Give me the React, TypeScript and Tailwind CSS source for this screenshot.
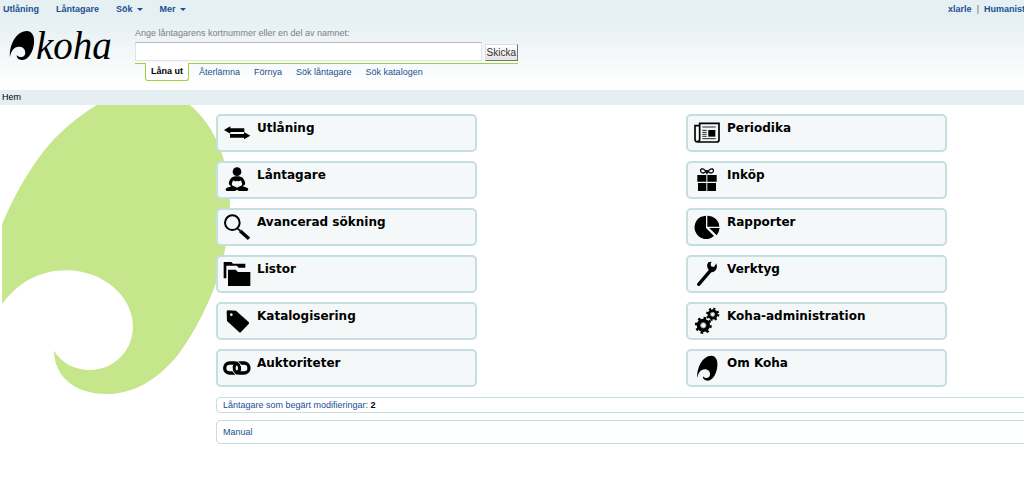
import type { ReactNode } from "react";

const LEAF =
  "M0 68 C-3 38 15 0 42 0 C56 0 62 15 60 32 C58 54 46 75 32 75 C21 75 16 69 17 62 C23 71 39 68 38 56 C38 46 31 41 22 41 C10 41 2 52 0 68 Z";

function Icon({ children }: { children: ReactNode }) {
  return (
    <svg viewBox="0 0 78 78" className="size-[26px] shrink-0 overflow-visible" aria-hidden="true">
      {children}
    </svg>
  );
}

const arrows = (
  <Icon>
    <path d="M0 30 L19 19 V25 H61 V36 H19 V41 Z M79 47 L60 36 V42 H18 V53 H60 V58 Z" />
  </Icon>
);
const patron = (
  <Icon>
    <circle cx="39" cy="14" r="13" />
    <path d="M39 28 C22 28 18 36 15 46 C13 52 17 56 22 58 L9 62 C3 65 4 72 12 72 H33 L39 68 L45 72 H66 C74 72 75 65 69 62 L56 58 C61 56 65 52 63 46 C60 36 56 28 39 28 Z" />
    <path d="M27 40 C32 44 36 43 39 41 C42 43 46 44 51 40 C52 47 56 49 54 54 C50 60 43 58 39 62 C35 58 28 60 24 54 C22 49 26 47 27 40 Z" fill="#f4f8f9" />
  </Icon>
);
const search = (
  <Icon>
    <circle cx="25" cy="26" r="22" fill="none" stroke="#000" strokeWidth="6" />
    <path d="M40 43 L48 50" stroke="#000" strokeWidth="5" />
    <path d="M48 50 L75 74" stroke="#000" strokeWidth="10" />
  </Icon>
);
const folders = (
  <Icon>
    <path d="M-1 3 H22 L27 8 H64 V20 H44 L38 14 H7 V52 H-1 Z" />
    <path d="M12 26 H35 L42 33 H79 V75 H12 Z" />
  </Icon>
);
const tag = (
  <Icon>
    <path d="M11 7 L36 8 L74 42 Q77 45 74 48 L51 72 Q48 75 45 72 L9 39 L8 11 Q8 8 11 7 Z" />
    <circle cx="22" cy="20" r="4" fill="#f4f8f9" />
  </Icon>
);
const chain = (
  <Icon>
    <g fill="none" stroke="#000" strokeWidth="10">
      <rect x="2" y="24" width="45" height="30" rx="15" />
      <rect x="30" y="24" width="45" height="30" rx="15" />
    </g>
    <path d="M24 36 C24 47 29 54 37 60 M53 42 C53 31 48 24 40 18" fill="none" stroke="#f4f8f9" strokeWidth="3" />
  </Icon>
);
const news = (
  <Icon>
    <path d="M17 17 H3 V58 Q3 66 11 66 H69 Q75 66 75 60 V10 H17 V56 Q17 65 10 65" fill="none" stroke="#000" strokeWidth="5" />
    <rect x="43" y="30" width="21" height="20" />
    <path d="M25 21 H65 M25 31 H38 M25 37 H38 M25 43 H38 M25 49 H38 M25 56 H65" stroke="#000" strokeWidth="2.5" />
  </Icon>
);
const gift = (
  <Icon>
    <path d="M10 24 H37 V44 H10 Z M40 24 H68 V44 H40 Z M12 48 H37 V72 H12 Z M40 48 H66 V72 H40 Z" />
    <path d="M39 19 C34 9 28 4 22 6 C17 9 20 18 27 18 C33 18 36 12 39 11 C42 12 45 18 51 18 C58 18 61 9 56 6 C50 4 44 9 39 19 Z" fill="none" stroke="#000" strokeWidth="4" />
  </Icon>
);
const pie = (
  <Icon>
    <path d="M36 5 A35 35 0 1 0 60 66 L36 42 Z" />
    <path d="M40 5 A35 35 0 0 1 76 38 L40 38 Z" />
    <path d="M46 42 H77 Q75 56 68 64 Z" />
  </Icon>
);
const wrench = (
  <Icon>
    <path d="M14 70 L50 28" stroke="#000" strokeWidth="10" strokeLinecap="round" />
    <path d="M43 4 C37 12 39 20 44 26 L50 34 C59 35 67 29 69 18 L67 7 L60 18 L51 16 L50 8 L53 2 Z" />
  </Icon>
);
const gears = (
  <Icon>
    <g fill="none" stroke="#000">
      <circle cx="28" cy="52" r="14" strokeWidth="12" />
      <circle cx="28" cy="52" r="22" strokeWidth="7" strokeDasharray="8 9.28" />
      <circle cx="56" cy="19" r="11" strokeWidth="9" />
      <circle cx="56" cy="19" r="17" strokeWidth="6" strokeDasharray="6.2 7.15" />
      <circle cx="28" cy="52" r="8" stroke="#999" strokeWidth="3" />
      <circle cx="56" cy="19" r="6" stroke="#999" strokeWidth="3" />
    </g>
  </Icon>
);
const leaf = (
  <Icon>
    <path d={LEAF} transform="translate(10 2)" />
  </Icon>
);

type Item = { label: string; icon: ReactNode };

const columns: Item[][] = [
  [
    { label: "Utlåning", icon: arrows },
    { label: "Låntagare", icon: patron },
    { label: "Avancerad sökning", icon: search },
    { label: "Listor", icon: folders },
    { label: "Katalogisering", icon: tag },
    { label: "Auktoriteter", icon: chain },
  ],
  [
    { label: "Periodika", icon: news },
    { label: "Inköp", icon: gift },
    { label: "Rapporter", icon: pie },
    { label: "Verktyg", icon: wrench },
    { label: "Koha-administration", icon: gears },
    { label: "Om Koha", icon: leaf },
  ],
];

function Caret() {
  return (
    <svg viewBox="0 0 6 3" className="h-[3px] w-[6px]" aria-hidden="true">
      <path d="M0 0 H6 L3 3 Z" fill="#1b4f93" />
    </svg>
  );
}

export default function App() {
  return (
    <div className="overflow-x-hidden bg-white font-['Liberation_Sans',Arial,sans-serif] text-[9px] leading-3 text-black">
      <header className="h-[90px] bg-linear-to-b from-[#e6eff2] from-20% to-white to-95%">
        <nav className="flex h-[18px] items-center justify-between whitespace-nowrap pl-[3px] font-bold text-[#1b4f93]">
          <div className="flex items-center gap-[17px]">
            <a href="#utlaning">Utlåning</a>
            <a href="#lantagare">Låntagare</a>
            <button type="button" className="flex items-center gap-1">
              Sök <Caret />
            </button>
            <button type="button" className="flex items-center gap-1">
              Mer <Caret />
            </button>
          </div>
          <div className="-mr-px flex gap-[5px]">
            <a href="#konto">xlarle</a>
            <span className="font-normal text-[#666]">|</span>
            <a href="#bibliotek">Humanist</a>
          </div>
        </nav>
        <div className="flex">
          <a href="#hem" className="flex w-[135px] items-start pl-[10px] pt-[13px]" aria-label="Koha">
            <svg viewBox="0 0 60 75" className="h-[29px] w-6 shrink-0 overflow-visible" preserveAspectRatio="none" aria-hidden="true">
              <path d={LEAF} />
            </svg>
            <span className="pl-[2px] font-['Liberation_Serif',serif] text-[39px] italic leading-[30px]">koha</span>
          </a>
          <form className="w-[383px] pt-[9px]" onSubmit={(e) => e.preventDefault()}>
            <label htmlFor="kort" className="block text-[#808080]">
              Ange låntagarens kortnummer eller en del av namnet:
            </label>
            <div className="flex items-end gap-[3px] pb-[2px] pt-[3px]">
              <input
                id="kort"
                type="text"
                className="h-[19px] min-w-0 flex-1 border border-[#dde3e6] border-t-[#b5b8ba] bg-white px-1 text-[10px]"
              />
              <button
                type="submit"
                className="h-[17px] border border-[#ddd] border-b-[#777] border-r-[#777] bg-linear-to-b from-white to-[#e3e3e3] px-px text-[10px] leading-3 text-[#333]"
              >
                Skicka
              </button>
            </div>
            <div className="h-px bg-[#a0d03c]" />
            <div className="flex items-start pl-[10px] text-[#1b4f93]">
              <a
                href="#lana"
                className="-mt-px rounded-b-[3px] border border-t-0 border-[#a0d03c] bg-white px-[5px] pb-[3px] pt-[2px] font-bold text-black"
              >
                Låna ut
              </a>
              <div className="flex gap-[14px] pl-[10px] pt-[2px]">
                <a href="#aterlamna">Återlämna</a>
                <a href="#fornya">Förnya</a>
                <a href="#sok">Sök låntagare</a>
                <a href="#katalog">Sök katalogen</a>
              </div>
            </div>
          </form>
        </div>
      </header>
      <div className="h-[15px] bg-[#e5eff1] pl-[2px] leading-[14px]">Hem</div>
      <main className="relative pb-9 pl-[216px] pt-[9px]">
        <svg viewBox="6 14 684 868" className="absolute left-[2px] top-0 h-[289px] w-[228px]" aria-hidden="true">
          <path
            fill="#c5e68a"
            d="M290 14 C240 45 190 85 150 130 C90 200 40 290 6 372 L6 612 C50 550 115 510 200 510 C310 510 399 590 399 678 C399 755 340 810 270 810 C225 810 185 790 162 752 C162 825 220 882 320 882 C400 882 470 840 530 770 C580 705 620 625 650 545 C680 450 690 380 690 310 C690 200 655 85 570 14 Z"
          />
        </svg>
        <div className="relative flex justify-between pr-[77px]">
          {columns.map((items, i) => (
            <ul key={i} className="flex w-[261px] flex-col gap-[9px]">
              {items.map((item) => (
                <li key={item.label}>
                  <a
                    href="#modul"
                    className="flex h-[38px] gap-[7px] rounded-[5px] border-2 border-[#c3dfe0] bg-[#f4f8f9] pl-[6px] pt-1"
                  >
                    {item.icon}
                    <span className="font-['DejaVu_Sans',Verdana,sans-serif] text-[12px] font-bold leading-4">
                      {item.label}
                    </span>
                  </a>
                </li>
              ))}
            </ul>
          ))}
        </div>
        <div className="relative -mr-2 mt-[10px] flex flex-col gap-[7px]">
          <div className="rounded-[4px] border border-[#c5dfe3] px-[6px] py-px">
            <a href="#andringar" className="text-[#1b4f93]">
              Låntagare som begärt modifieringar:
            </a>{" "}
            <b>2</b>
          </div>
          <div className="rounded-[4px] border border-[#c5dfe3] px-[6px] py-[5px]">
            <a href="#manual" className="text-[#1b4f93]">
              Manual
            </a>
          </div>
        </div>
      </main>
    </div>
  );
}
